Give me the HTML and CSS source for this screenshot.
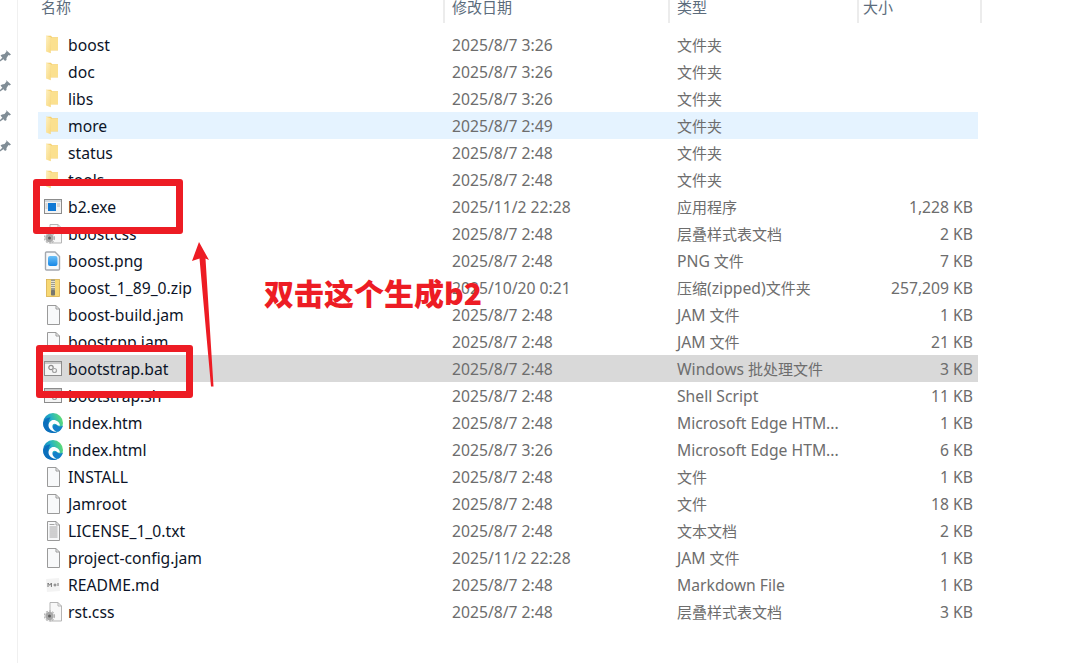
FILE: index.html
```html
<!DOCTYPE html>
<html lang="zh-CN">
<head>
<meta charset="utf-8">
<title>boost</title>
<link rel="stylesheet" href="styles.css">
</head>
<body>
<svg class="defs" width="0" height="0" aria-hidden="true">
  <defs>
    <linearGradient id="fg" x1="0" y1="0" x2="1" y2="1">
      <stop offset="0" stop-color="#fef0c0"/>
      <stop offset="1" stop-color="#f8d87e"/>
    </linearGradient>
    <linearGradient id="eg" x1="1" y1="0.3" x2="0" y2="0.7">
      <stop offset="0" stop-color="#62e070"/>
      <stop offset=".5" stop-color="#25b0c6"/>
      <stop offset="1" stop-color="#0b73c0"/>
    </linearGradient>
    <linearGradient id="pg" x1="0" y1="0" x2="0" y2="1">
      <stop offset="0" stop-color="#6cc0f7"/>
      <stop offset="1" stop-color="#1787e6"/>
    </linearGradient>
    <symbol id="folder" viewBox="0 0 20 20">
      <path d="M3 .8h5l1.200 1.400H15V15.500H7.500L3 16z" fill="#f5d06e"/>
      <path d="M7.800 2.800H15V15H7.800z" fill="#fbe08f"/>
      <path d="M3 .8L7.800 2.200V18.300L3 16.500z" fill="url(#fg)"/>
    </symbol>
    <symbol id="page" viewBox="0 0 20 20">
      <path d="M4.500 .5h8.500l3.500 3.500v15.500H4.500z" fill="#f8f9fa" stroke="#9a9a9a"/>
      <path d="M13 .5V4h3.500" fill="none" stroke="#9a9a9a"/>
    </symbol>
    <symbol id="txt" viewBox="0 0 20 20">
      <path d="M4.500 .5h8.500l3.500 3.500v15.500H4.500z" fill="#f8f9fa" stroke="#9a9a9a"/>
      <path d="M13 .5V4h3.500M6.500 3.500h5M6.500 6h8M6.500 8h8M6.500 10h8M6.500 12h8M6.500 14h8M6.500 16h8" fill="none" stroke="#8f8f8f" stroke-width=".8"/>
    </symbol>
    <symbol id="exe" viewBox="0 0 20 20">
      <rect x="1.500" y="2.500" width="17" height="14" fill="#f3f3f3" stroke="#8c8c8c"/>
      <rect x="2" y="3" width="16" height="2" fill="#cfd6dc"/>
      <rect x="5" y="6" width="8" height="8" fill="#0f78d4"/>
      <path d="M2.500 7h2M2.500 9h2M2.500 11h2M14 7h3M14 9h3" stroke="#a6a6a6" stroke-width=".8"/>
    </symbol>
    <symbol id="bat" viewBox="0 0 20 20">
      <rect x="1.500" y="2.500" width="17" height="14" fill="#f5f5f5" stroke="#8c8c8c"/>
      <rect x="2" y="3" width="16" height="2" fill="#c9c9c9"/>
      <circle cx="8" cy="8.500" r="2.200" fill="none" stroke="#8b8b8b" stroke-width="1.200"/>
      <circle cx="11.500" cy="11.500" r="2" fill="none" stroke="#a5a5a5" stroke-width="1.200"/>
    </symbol>
    <symbol id="css" viewBox="0 0 20 20">
      <path d="M7 .5h8l3.500 3.500v15H7z" fill="#f8f8f8" stroke="#b5b5b5"/>
      <path d="M15 .5V4h3.500" fill="none" stroke="#b5b5b5"/>
      <circle cx="6.500" cy="14" r="4.200" fill="#a8a8a8"/>
      <circle cx="6.500" cy="14" r="5" fill="none" stroke="#b4b4b4" stroke-width="1.200" stroke-dasharray="2 1.200"/>
      <circle cx="6.500" cy="14" r="1.500" fill="#5f5f5f"/>
    </symbol>
    <symbol id="png" viewBox="0 0 20 20">
      <path d="M3.500 1c-.5 0-1 .5-1 1v16c0 .5.500 1 1 1h12c.5 0 1-.5 1-1V5.500L12 1z" fill="#f7f9fb" stroke="#a4a8ae" stroke-width="1.400"/>
      <rect x="5" y="5" width="9.500" height="10" rx="2" fill="url(#pg)"/>
    </symbol>
    <symbol id="zip" viewBox="0 0 20 20">
      <rect x="3.500" y="1.500" width="13" height="17" fill="#f7d874" stroke="#d7b04d" stroke-width=".8"/>
      <rect x="8" y="1.500" width="4" height="11" fill="#9c9c8e"/>
      <path d="M8 3.500h4M8 5.500h4M8 7.500h4M8 9.500h4" stroke="#efe9d5" stroke-width=".9"/>
      <rect x="8" y="12" width="4" height="5.500" rx=".8" fill="#77776f"/>
    </symbol>
    <symbol id="edge" viewBox="0 0 20 20">
      <circle cx="10" cy="10" r="10" fill="url(#eg)"/>
      <path d="M.2 11C.8 6.500 4 4.500 7.500 4.500 4.500 8 5 14 9 17 11 18.500 13.500 19 15.500 18.500 13.800 19.500 12 20 10 20 4 20 .4 16 .2 11z" fill="#0b6fbc"/>
      <path d="M9.400 13C9.400 16 12 18.500 15.500 18.700 17.500 17.500 19.200 15.500 20 12.500 18 14 15 14 13.200 11.200z" fill="#1480ca"/>
      <path d="M17 12.500C16.500 8.500 12 6 8.500 7.500 5.500 9 4.800 12.500 6.300 15.300 8 18 11 19.300 13.500 18.700 10.800 17.500 9.200 15.500 9.400 13 9.700 10.500 11.800 10.200 13.200 11.200 14.300 12.200 15.500 13 17 12.500z" fill="#fff"/>
    </symbol>
    <symbol id="md" viewBox="0 0 20 20">
      <rect x="3.500" y="3.500" width="13" height="13" fill="#f3f3f3" transform="rotate(-4 10 10)"/>
      <path d="M5 12V8l1.700 2.300L8.400 8v4M10.500 10h3M12 8.500v3M15 8v3" fill="none" stroke="#777" stroke-width="1"/>
    </symbol>
    <symbol id="pin" viewBox="0 0 12 12">
      <path d="M7 0l5 4.500-1.500 1-1-.5-2 3v2L6 11 1.500 5.500 3 4.500 5.500 4l2-2.500z" fill="#808d96"/>
      <path d="M3.500 7.500L0 11l.6.800L4.800 9z" fill="#808d96"/>
    </symbol>
  </defs>
</svg>

<div class="window">
  <aside class="rail">
    <svg class="pin"><use href="#pin"/></svg>
    <svg class="pin"><use href="#pin"/></svg>
    <svg class="pin"><use href="#pin"/></svg>
    <svg class="pin"><use href="#pin"/></svg>
  </aside>
  <main class="pane">
    <div class="head">
      <div class="hcell hname">名称</div>
      <div class="hcell hdate">修改日期</div>
      <div class="hcell htype">类型</div>
      <div class="hcell hsize">大小</div>
    </div>
    <div class="list">
      <div class="row"><svg class="ico"><use href="#folder"/></svg><span class="name">boost</span><span class="date">2025/8/7 3:26</span><span class="type">文件夹</span><span class="size"></span></div>
      <div class="row"><svg class="ico"><use href="#folder"/></svg><span class="name">doc</span><span class="date">2025/8/7 3:26</span><span class="type">文件夹</span><span class="size"></span></div>
      <div class="row"><svg class="ico"><use href="#folder"/></svg><span class="name">libs</span><span class="date">2025/8/7 3:26</span><span class="type">文件夹</span><span class="size"></span></div>
      <div class="row hover"><svg class="ico"><use href="#folder"/></svg><span class="name">more</span><span class="date">2025/8/7 2:49</span><span class="type">文件夹</span><span class="size"></span></div>
      <div class="row"><svg class="ico"><use href="#folder"/></svg><span class="name">status</span><span class="date">2025/8/7 2:48</span><span class="type">文件夹</span><span class="size"></span></div>
      <div class="row"><svg class="ico"><use href="#folder"/></svg><span class="name">tools</span><span class="date">2025/8/7 2:48</span><span class="type">文件夹</span><span class="size"></span></div>
      <div class="row"><svg class="ico"><use href="#exe"/></svg><span class="name">b2.exe</span><span class="date">2025/11/2 22:28</span><span class="type">应用程序</span><span class="size">1,228 KB</span></div>
      <div class="row"><svg class="ico"><use href="#css"/></svg><span class="name">boost.css</span><span class="date">2025/8/7 2:48</span><span class="type">层叠样式表文档</span><span class="size">2 KB</span></div>
      <div class="row"><svg class="ico"><use href="#png"/></svg><span class="name">boost.png</span><span class="date">2025/8/7 2:48</span><span class="type"><span class="lat">PNG</span> 文件</span><span class="size">7 KB</span></div>
      <div class="row"><svg class="ico"><use href="#zip"/></svg><span class="name">boost_1_89_0.zip</span><span class="date">2025/10/20 0:21</span><span class="type">压缩<span class="lat">(zipped)</span>文件夹</span><span class="size">257,209 KB</span></div>
      <div class="row"><svg class="ico"><use href="#page"/></svg><span class="name">boost-build.jam</span><span class="date">2025/8/7 2:48</span><span class="type"><span class="lat">JAM</span> 文件</span><span class="size">1 KB</span></div>
      <div class="row"><svg class="ico"><use href="#page"/></svg><span class="name">boostcpp.jam</span><span class="date">2025/8/7 2:48</span><span class="type"><span class="lat">JAM</span> 文件</span><span class="size">21 KB</span></div>
      <div class="row selected"><svg class="ico"><use href="#bat"/></svg><span class="name">bootstrap.bat</span><span class="date">2025/8/7 2:48</span><span class="type"><span class="lat">Windows</span> 批处理文件</span><span class="size">3 KB</span></div>
      <div class="row"><svg class="ico"><use href="#bat"/></svg><span class="name">bootstrap.sh</span><span class="date">2025/8/7 2:48</span><span class="type"><span class="lat">Shell Script</span></span><span class="size">11 KB</span></div>
      <div class="row"><svg class="ico"><use href="#edge"/></svg><span class="name">index.htm</span><span class="date">2025/8/7 2:48</span><span class="type"><span class="lat">Microsoft Edge HTM...</span></span><span class="size">1 KB</span></div>
      <div class="row"><svg class="ico"><use href="#edge"/></svg><span class="name">index.html</span><span class="date">2025/8/7 3:26</span><span class="type"><span class="lat">Microsoft Edge HTM...</span></span><span class="size">6 KB</span></div>
      <div class="row"><svg class="ico"><use href="#page"/></svg><span class="name">INSTALL</span><span class="date">2025/8/7 2:48</span><span class="type">文件</span><span class="size">1 KB</span></div>
      <div class="row"><svg class="ico"><use href="#page"/></svg><span class="name">Jamroot</span><span class="date">2025/8/7 2:48</span><span class="type">文件</span><span class="size">18 KB</span></div>
      <div class="row"><svg class="ico"><use href="#txt"/></svg><span class="name">LICENSE_1_0.txt</span><span class="date">2025/8/7 2:48</span><span class="type">文本文档</span><span class="size">2 KB</span></div>
      <div class="row"><svg class="ico"><use href="#page"/></svg><span class="name">project-config.jam</span><span class="date">2025/11/2 22:28</span><span class="type"><span class="lat">JAM</span> 文件</span><span class="size">1 KB</span></div>
      <div class="row"><svg class="ico"><use href="#md"/></svg><span class="name">README.md</span><span class="date">2025/8/7 2:48</span><span class="type"><span class="lat">Markdown File</span></span><span class="size">1 KB</span></div>
      <div class="row"><svg class="ico"><use href="#css"/></svg><span class="name">rst.css</span><span class="date">2025/8/7 2:48</span><span class="type">层叠样式表文档</span><span class="size">3 KB</span></div>
    </div>
  </main>
</div>

<div class="mark mark-exe"></div>
<div class="mark mark-bat"></div>
<svg class="arrow" width="30" height="150" viewBox="0 0 30 150" aria-hidden="true">
  <path d="M9 2L19 20 15.500 18.500 23.500 146.500 21 146.500 9.500 18.500 2 21z" fill="#ed1c24"/>
</svg>
<div class="note">双击这个生成b2</div>
</body>
</html>
```
FILE: styles.css
```css
html, body {
  margin: 0;
  padding: 0;
  background: #fff;
}
body {
  width: 1081px;
  height: 663px;
  overflow: hidden;
  position: relative;
  font-family: "Noto Sans", "Noto Sans CJK SC", sans-serif;
  font-size: 15.7px;
}
.defs {
  position: absolute;
}
.window {
  display: flex;
  height: 663px;
}
.rail {
  width: 17px;
  flex: none;
  border-right: 1px solid #f0f0f0;
  display: flex;
  flex-direction: column;
  gap: 18px;
  padding-top: 50px;
  box-sizing: content-box;
}
.pin {
  width: 12px;
  height: 12px;
  margin-left: -1px;
}
.pane {
  flex: 1;
  min-width: 0;
}
.head {
  display: flex;
  height: 23px;
  margin-left: 20px;
  color: #5c6c7c;
  font-size: 15px;
  line-height: 15px;
}
.hcell {
  flex: none;
  box-sizing: border-box;
  border-right: 2px solid #ececec;
  padding-left: 7px;
}
.hname {
  width: 407px;
  padding-left: 3px;
}
.hdate {
  width: 225px;
}
.htype {
  width: 189px;
}
.hsize {
  width: 123px;
  padding-left: 4px;
}
.list {
  margin: 8px 0 0 20px;
  width: 940px;
}
.row {
  display: flex;
  align-items: center;
  box-sizing: border-box;
  height: 27px;
  line-height: 26px;
  padding-top: 1px;
}
.hover {
  background: #e5f3ff;
}
.selected {
  background: #d9d9d9;
}
.ico {
  flex: none;
  width: 20px;
  height: 20px;
  margin-left: 5px;
}
.name {
  width: 384px;
  flex: none;
  margin-left: 5px;
  color: #0c1428;
  white-space: nowrap;
}
.date {
  width: 225px;
  flex: none;
  color: #6d6d6d;
}
.type {
  width: 200px;
  flex: none;
  color: #6d6d6d;
  font-size: 15px;
  white-space: nowrap;
}
.lat {
  font-size: 15.7px;
}
.size {
  flex: 1;
  text-align: right;
  padding-right: 5px;
  color: #6d6d6d;
  white-space: nowrap;
}
.mark {
  position: absolute;
  box-sizing: border-box;
  border: 7px solid #ed1c24;
  border-radius: 3px;
}
.mark-exe {
  left: 33px;
  top: 179px;
  width: 150px;
  height: 55px;
}
.mark-bat {
  left: 36px;
  top: 345px;
  width: 157px;
  height: 53px;
}
.arrow {
  position: absolute;
  left: 190px;
  top: 240px;
}
.note {
  position: absolute;
  left: 264px;
  top: 273px;
  color: #ed1c24;
  font-size: 30px;
  line-height: 38px;
  font-weight: 900;
  font-family: "Noto Sans CJK SC", sans-serif;
  white-space: nowrap;
}
```
